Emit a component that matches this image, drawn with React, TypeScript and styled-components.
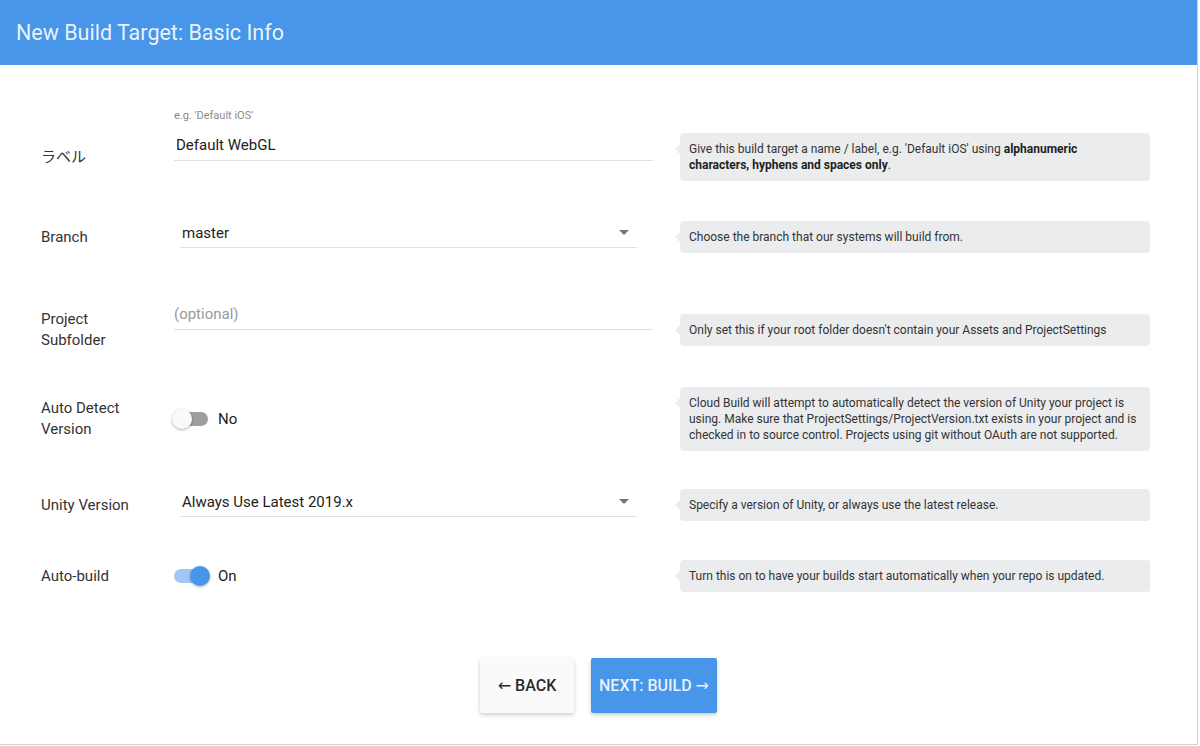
import React from "react";
import { styled, createGlobalStyle } from "styled-components";

const GlobalStyle = createGlobalStyle`
  html, body {
    margin: 0;
    padding: 0;
    background: #ffffff;
  }
  body {
    font-family: Roboto, "Noto Sans CJK JP", "Liberation Sans", sans-serif;
    -webkit-font-smoothing: antialiased;
  }
  * {
    box-sizing: border-box;
  }
`;

type Field =
  | { kind: "text"; value?: string; placeholder?: string; helper?: string; lift: number }
  | { kind: "select"; value: string; lift: number }
  | { kind: "switch"; on: boolean };

type RowData = {
  label: React.ReactNode;
  height: number;
  field: Field;
  tip: React.ReactNode;
};

const rows: RowData[] = [
  {
    label: "ラベル",
    height: 80,
    field: { kind: "text", value: "Default WebGL", helper: "e.g. 'Default iOS'", lift: 22 },
    tip: (
      <>
        Give this build target a name / label, e.g. 'Default iOS' using{" "}
        <b>alphanumeric characters, hyphens and spaces only</b>.
      </>
    ),
  },
  {
    label: "Branch",
    height: 80,
    field: { kind: "select", value: "master", lift: 4 },
    tip: "Choose the branch that our systems will build from.",
  },
  {
    label: (
      <>
        Project
        <br />
        Subfolder
      </>
    ),
    height: 106,
    field: { kind: "text", placeholder: "(optional)", lift: 16 },
    tip: "Only set this if your root folder doesn't contain your Assets and ProjectSettings",
  },
  {
    label: (
      <>
        Auto Detect
        <br />
        Version
      </>
    ),
    height: 72,
    field: { kind: "switch", on: false },
    tip: "Cloud Build will attempt to automatically detect the version of Unity your project is using. Make sure that ProjectSettings/ProjectVersion.txt exists in your project and is checked in to source control. Projects using git without OAuth are not supported.",
  },
  {
    label: "Unity Version",
    height: 100,
    field: { kind: "select", value: "Always Use Latest 2019.x", lift: 3 },
    tip: "Specify a version of Unity, or always use the latest release.",
  },
  {
    label: "Auto-build",
    height: 42,
    field: { kind: "switch", on: true },
    tip: "Turn this on to have your builds start automatically when your repo is updated.",
  },
];

function FieldControl({ field }: { field: Field }) {
  if (field.kind === "text") {
    return (
      <TextField $lift={field.lift}>
        {field.helper && <Helper>{field.helper}</Helper>}
        <Input $empty={!field.value}>{field.value || field.placeholder}</Input>
      </TextField>
    );
  }
  if (field.kind === "select") {
    return (
      <Select $lift={field.lift}>
        <span>{field.value}</span>
        <Caret />
      </Select>
    );
  }
  return (
    <SwitchRow>
      <Switch>
        <Track $on={field.on} />
        <Thumb $on={field.on} />
      </Switch>
      <SwitchText>{field.on ? "On" : "No"}</SwitchText>
    </SwitchRow>
  );
}

export default function App() {
  return (
    <Page>
      <GlobalStyle />
      <Header>New Build Target: Basic Info</Header>
      <Form>
        {rows.map((row, i) => (
          <Row key={i} $h={row.height}>
            <Label>{row.label}</Label>
            <FieldControl field={row.field} />
            <Tip>{row.tip}</Tip>
          </Row>
        ))}
      </Form>
      <Footer>
        <Button>
          <Arrow>←</Arrow> BACK
        </Button>
        <Button $primary>
          NEXT: BUILD <Arrow>→</Arrow>
        </Button>
      </Footer>
    </Page>
  );
}

const Page = styled.div`
  width: 1198px;
  height: 745px;
  border-right: 1px solid #d2d2d2;
  border-bottom: 1px solid #d2d2d2;
  background: #ffffff;
  overflow: hidden;
`;

const Header = styled.div`
  height: 65px;
  display: flex;
  align-items: center;
  padding-left: 16px;
  background: #4796ea;
  color: rgba(255, 255, 255, 0.9);
  font-size: 21.5px;
  font-weight: 400;
`;

const Form = styled.div`
  padding: 52px 47px 0 41px;
  display: flex;
  flex-direction: column;
`;

const Row = styled.div<{ $h: number }>`
  height: ${(p) => p.$h}px;
  display: grid;
  grid-template-columns: 106px 479px 1fr;
  column-gap: 27px;
  align-items: center;
`;

const Label = styled.div`
  font-size: 15px;
  line-height: 21px;
  color: #333333;
`;

const TextField = styled.div<{ $lift: number }>`
  display: flex;
  flex-direction: column;
  margin: ${(p) => `-${p.$lift}px 0 ${p.$lift}px`};
`;

const Helper = styled.div`
  font-size: 11px;
  line-height: 14px;
  color: #8a8a8a;
  margin-bottom: 6px;
`;

const Input = styled.div<{ $empty: boolean }>`
  height: 32px;
  display: flex;
  align-items: center;
  padding-left: ${(p) => (p.$empty ? 0 : 2)}px;
  font-size: 15px;
  color: ${(p) => (p.$empty ? "#9a9a9a" : "#222222")};
  border-bottom: 1px solid #e0e0e0;
`;

const Select = styled.div<{ $lift: number }>`
  width: 457px;
  height: 30px;
  margin: ${(p) => `-${p.$lift}px 0 ${p.$lift}px 6px`};
  padding: 0 8px 0 2px;
  display: flex;
  align-items: center;
  justify-content: space-between;
  font-size: 15px;
  color: #222222;
  border-bottom: 1px solid #e0e0e0;
`;

const Caret = styled.span`
  width: 0;
  height: 0;
  border-left: 5px solid transparent;
  border-right: 5px solid transparent;
  border-top: 5px solid #757575;
`;

const SwitchRow = styled.div`
  display: flex;
  align-items: center;
  margin-left: -2px;
`;

const Switch = styled.div`
  position: relative;
  width: 38px;
  height: 20px;
`;

const Track = styled.div<{ $on: boolean }>`
  position: absolute;
  left: 2px;
  top: 3px;
  width: 34px;
  height: 14px;
  border-radius: 7px;
  background: ${(p) => (p.$on ? "#a3c8f4" : "#9e9e9e")};
`;

const Thumb = styled.div<{ $on: boolean }>`
  position: absolute;
  top: 0;
  left: ${(p) => (p.$on ? 18 : 0)}px;
  width: 20px;
  height: 20px;
  border-radius: 50%;
  background: ${(p) => (p.$on ? "#4796ea" : "#fafafa")};
  box-shadow: 0 1px 3px rgba(0, 0, 0, 0.3);
`;

const SwitchText = styled.span`
  margin-left: 8px;
  font-size: 15px;
  color: #222222;
`;

const Tip = styled.div`
  position: relative;
  background: #ebecee;
  border-radius: 4px;
  padding: 8px 10px 8px 9px;
  font-size: 12px;
  line-height: 16px;
  color: #333333;

  b {
    font-weight: 700;
    color: #222222;
  }

  &::before {
    content: "";
    position: absolute;
    left: -5px;
    top: 11px;
    border-style: solid;
    border-width: 5px 5px 5px 0;
    border-color: transparent #ebecee transparent transparent;
  }
`;

const Footer = styled.div`
  margin-top: 61px;
  display: flex;
  justify-content: center;
  gap: 17px;
`;

const Button = styled.button<{ $primary?: boolean }>`
  height: 55px;
  min-width: 94px;
  padding: 0 8px;
  border: none;
  border-radius: 2px;
  font-family: Roboto, "Liberation Sans", sans-serif;
  font-size: 16px;
  font-weight: 500;
  background: ${(p) => (p.$primary ? "#4796ea" : "#fafafa")};
  color: ${(p) => (p.$primary ? "rgba(255, 255, 255, 0.88)" : "#2a2a2a")};
  box-shadow: 0 2px 4px rgba(0, 0, 0, 0.2);
  cursor: pointer;
`;

const Arrow = styled.span`
  font-family: "DejaVu Sans", sans-serif;
  font-weight: 400;
`;
